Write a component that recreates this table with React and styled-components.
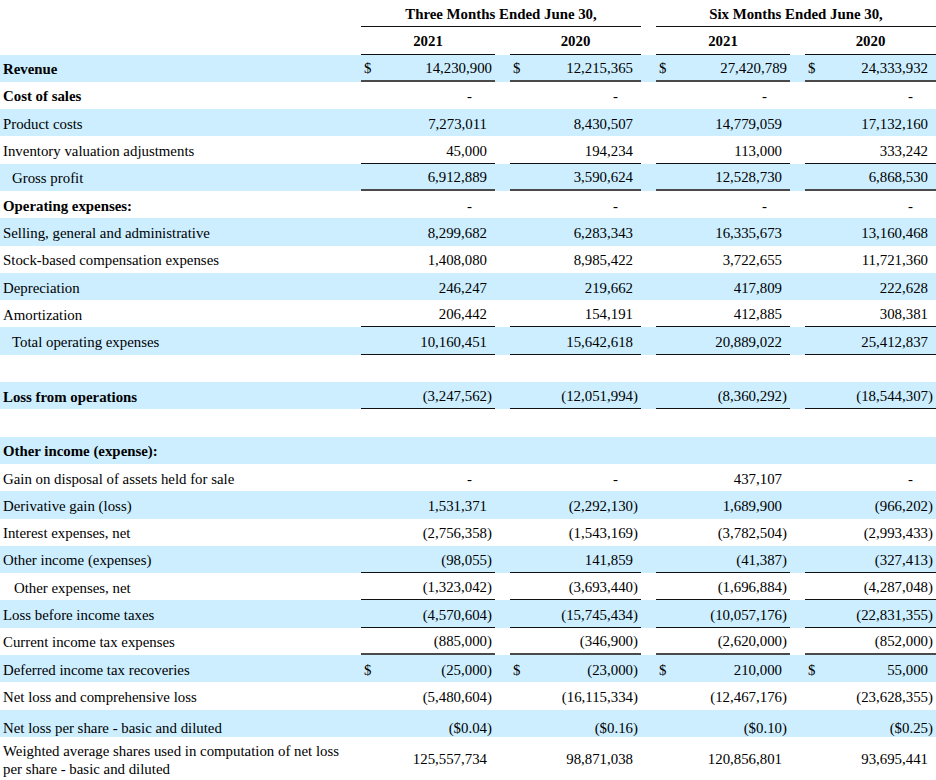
import React from "react";
import styled, { createGlobalStyle, css } from "styled-components";

const Global = createGlobalStyle`
  html, body { margin: 0; padding: 0; background: #ffffff; }
  body { font-family: "Liberation Serif", "Times New Roman", serif; color: #000; }
  * { box-sizing: border-box; }
`;

const COLS = "361px 134px 15px 131px 15px 134px 15px 131px";
const BLUE = "#cceeff";

const Sheet = styled.div`
  width: 936px;
  font-size: 14.85px;
  line-height: 17px;
`;

const Row = styled.div`
  display: grid;
  grid-template-columns: ${COLS};
  height: ${(p) => p.$h || 27.3}px;
  background: ${(p) => (p.$bg ? BLUE : "transparent")};
`;

const lineCss = css`
  ${(p) =>
    p.$line === "thin" &&
    css`
      border-bottom: 1px solid #111;
    `}
  ${(p) =>
    p.$line === "thick" &&
    css`
      border-bottom: 2px solid #4a4a4a;
    `}
`;

const HeadGroup = styled.div`
  grid-column: ${(p) => p.$col};
  display: flex;
  align-items: center;
  justify-content: center;
  font-weight: bold;
  padding-top: 3px;
  border-bottom: 1px solid #111;
`;

const HeadYear = styled.div`
  grid-column: ${(p) => p.$col};
  display: flex;
  align-items: center;
  justify-content: center;
  font-weight: bold;
  padding-top: 3px;
  border-bottom: 1px solid #111;
`;

const Label = styled.div`
  grid-column: 1;
  display: flex;
  align-items: ${(p) => (p.$end ? "flex-end" : "center")};
  padding-left: ${(p) => p.$indent || 3}px;
  padding-top: ${(p) => (p.$end ? 0 : 3)}px;
  font-weight: ${(p) => (p.$bold ? "bold" : "normal")};
  line-height: ${(p) => (p.$tall ? 18 : 17)}px;
  white-space: nowrap;
`;

const Cell = styled.div`
  grid-column: ${(p) => p.$col};
  display: flex;
  align-items: ${(p) => (p.$end ? "flex-end" : "center")};
  padding-left: 3px;
  padding-right: 3px;
  padding-top: ${(p) => (p.$end ? 0 : 3)}px;
  ${lineCss}
`;

const Dollar = styled.span`
  flex: none;
`;

const Num = styled.span`
  flex: 1;
  text-align: right;
  white-space: nowrap;
  padding-right: ${(p) => (p.$dash ? 15 : 0)}px;
`;

const Paren = styled.span`
  flex: none;
  width: ${(p) => (p.$flush ? 0 : 5)}px;
  text-align: left;
`;

const COL_POS = [2, 4, 6, 8];

function ValueCell({ col, value, dollar, flush, line, end }) {
  let main = value || "";
  let close = "";
  const isNeg = main.startsWith("(") && main.endsWith(")");
  if (isNeg) {
    main = main.slice(0, -1);
    close = ")";
  }
  const dash = main === "-";
  return (
    <Cell $col={col} $line={line} $end={end}>
      {dollar && <Dollar>$</Dollar>}
      <Num $dash={dash}>{main}</Num>
      <Paren $flush={flush && !isNeg}>{close}</Paren>
    </Cell>
  );
}

const D = ["-", "-", "-", "-"];

const rows = [
  { label: "Revenue", bold: true, bg: true, dollar: true, flush: [true, false, true, false], line: "thick", v: ["14,230,900", "12,215,365", "27,420,789", "24,333,932"] },
  { label: "Cost of sales", bold: true, v: D },
  { label: "Product costs", bg: true, v: ["7,273,011", "8,430,507", "14,779,059", "17,132,160"] },
  { label: "Inventory valuation adjustments", line: "thin", v: ["45,000", "194,234", "113,000", "333,242"] },
  { label: "Gross profit", indent: 12, bg: true, line: "thick", v: ["6,912,889", "3,590,624", "12,528,730", "6,868,530"] },
  { label: "Operating expenses:", bold: true, v: D },
  { label: "Selling, general and administrative", bg: true, v: ["8,299,682", "6,283,343", "16,335,673", "13,160,468"] },
  { label: "Stock-based compensation expenses", v: ["1,408,080", "8,985,422", "3,722,655", "11,721,360"] },
  { label: "Depreciation", bg: true, v: ["246,247", "219,662", "417,809", "222,628"] },
  { label: "Amortization", line: "thin", v: ["206,442", "154,191", "412,885", "308,381"] },
  { label: "Total operating expenses", indent: 12, bg: true, line: "thin", v: ["10,160,451", "15,642,618", "20,889,022", "25,412,837"] },
  { label: "", v: null },
  { label: "Loss from operations", bold: true, bg: true, line: "thin", v: ["(3,247,562)", "(12,051,994)", "(8,360,292)", "(18,544,307)"] },
  { label: "", v: null },
  { label: "Other income (expense):", bold: true, bg: true, v: null },
  { label: "Gain on disposal of assets held for sale", v: ["-", "-", "437,107", "-"] },
  { label: "Derivative gain (loss)", bg: true, v: ["1,531,371", "(2,292,130)", "1,689,900", "(966,202)"] },
  { label: "Interest expenses, net", v: ["(2,756,358)", "(1,543,169)", "(3,782,504)", "(2,993,433)"] },
  { label: "Other income (expenses)", bg: true, line: "thin", v: ["(98,055)", "141,859", "(41,387)", "(327,413)"] },
  { label: "Other expenses, net", indent: 14, line: "thin", v: ["(1,323,042)", "(3,693,440)", "(1,696,884)", "(4,287,048)"] },
  { label: "Loss before income taxes", bg: true, line: "thin", v: ["(4,570,604)", "(15,745,434)", "(10,057,176)", "(22,831,355)"] },
  { label: "Current income tax expenses", line: "thick", v: ["(885,000)", "(346,900)", "(2,620,000)", "(852,000)"] },
  { label: "Deferred income tax recoveries", bg: true, dollar: true, v: ["(25,000)", "(23,000)", "210,000", "55,000"] },
  { label: "Net loss and comprehensive loss", v: ["(5,480,604)", "(16,115,334)", "(12,467,176)", "(23,628,355)"] },
  { label: "Net loss per share - basic and diluted", bg: true, end: true, v: ["($0.04)", "($0.16)", "($0.10)", "($0.25)"] },
];

export default function App() {
  return (
    <>
      <Global />
      <Sheet>
        <Row $h={27}>
          <HeadGroup $col="2 / 5">Three Months Ended June 30,</HeadGroup>
          <HeadGroup $col="6 / 9">Six Months Ended June 30,</HeadGroup>
        </Row>
        <Row $h={27.5}>
          <HeadYear $col={2}>2021</HeadYear>
          <HeadYear $col={4}>2020</HeadYear>
          <HeadYear $col={6}>2021</HeadYear>
          <HeadYear $col={8}>2020</HeadYear>
        </Row>
        {rows.map((r, i) => (
          <Row key={i} $bg={r.bg}>
            <Label $bold={r.bold} $indent={r.indent} $end={r.end}>
              {r.label}
            </Label>
            {r.v &&
              r.v.map((val, j) => (
                <ValueCell
                  key={j}
                  col={COL_POS[j]}
                  value={val}
                  dollar={r.dollar}
                  flush={r.flush ? r.flush[j] : false}
                  line={r.line}
                  end={r.end}
                />
              ))}
          </Row>
        ))}
        <Row $h={43}>
          <Label $tall>
            Weighted average shares used in computation of net loss
            <br />
            per share - basic and diluted
          </Label>
          {["125,557,734", "98,871,038", "120,856,801", "93,695,441"].map((val, j) => (
            <ValueCell key={j} col={COL_POS[j]} value={val} />
          ))}
        </Row>
      </Sheet>
    </>
  );
}
